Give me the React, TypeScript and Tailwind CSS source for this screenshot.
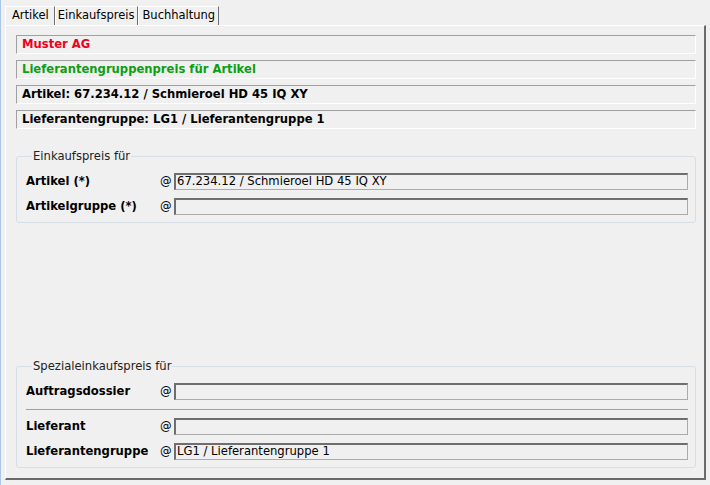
const font = { fontFamily: '"DejaVu Sans", Verdana, sans-serif' };

const HeaderBox = ({ text, color = "text-black" }: { text: string; color?: string }) => (
  <div className={`h-[19px] flex items-center pl-[5px] border-t border-l border-[#a0a0a0] border-b-white border-r-white border-b border-r text-[11.6px] font-bold ${color}`}>
    {text}
  </div>
);

const Field = ({ label, value = "" }: { label: string; value?: string }) => (
  <div className="flex items-center h-[17px]">
    <div className="w-[134px] text-[11.6px] font-bold text-black">{label}</div>
    <div className="w-[14px] text-[11.6px] text-black">@</div>
    <div className="flex-1 h-[17px] flex items-center pl-[1px] text-[11.6px] text-black border-t-2 border-l-2 border-[#6e6e6e] border-b border-r border-b-[#ababab] border-r-[#ababab] leading-none">
      {value}
    </div>
  </div>
);

const Group = ({ title, children }: { title: string; children: React.ReactNode }) => (
  <fieldset className="border border-[#d5dfe5] rounded-[3px] pl-[9px] pr-[7px] pt-[10px] pb-[7px]">
    <legend className="ml-[6px] px-[1px] text-[11.6px] leading-[13px] text-[#222]">{title}</legend>
    <div className="flex flex-col gap-[8px]">{children}</div>
  </fieldset>
);

export default function App() {
  return (
    <div style={font} className="w-[710px] h-[485px] bg-[#f0f0f0] border-l border-[#a9c6e4] overflow-hidden">
      <div className="flex pl-[4px] pt-[6px] h-[25px]">
        <div className="flex items-center pl-[6px] pr-[5px] h-[19px] border-t border-l border-white border-r border-r-[#6e6e6e] text-[11.5px] text-black">
          Artikel
        </div>
        <div className="flex items-center pl-[2px] pr-[3px] h-[19px] border-t border-l border-white border-r border-r-[#6e6e6e] text-[11.5px] text-black">
          Einkaufspreis
        </div>
        <div className="flex items-center pl-[3px] pr-[3px] h-[19px] border-t border-l border-white border-r border-r-[#6e6e6e] text-[11.5px] text-black">
          Buchhaltung
        </div>
      </div>
      <div className="ml-[4px] w-[701px] h-[455px] border-t border-l border-white border-r-2 border-b-2 border-r-[#6a6a6a] border-b-[#6a6a6a] pl-[10px] pr-[8px] pt-[9px]">
        <div className="flex flex-col gap-[6px]">
          <HeaderBox text="Muster AG" color="text-[#ee0022]" />
          <HeaderBox text="Lieferantengruppenpreis für Artikel" color="text-[#0d9e12]" />
          <HeaderBox text="Artikel: 67.234.12 / Schmieroel HD 45 IQ XY" />
          <HeaderBox text="Lieferantengruppe: LG1 / Lieferantengruppe 1" />
        </div>
        <div className="mt-[21px]">
          <Group title="Einkaufspreis für">
            <Field label="Artikel (*)" value="67.234.12 / Schmieroel HD 45 IQ XY" />
            <Field label="Artikelgruppe (*)" />
          </Group>
        </div>
        <div className="mt-[137px]">
          <Group title="Spezialeinkaufspreis für">
            <Field label="Auftragsdossier" />
            <div className="h-[1px] bg-[#a0a0a0] mt-[1px]" />
            <Field label="Lieferant" />
            <Field label="Lieferantengruppe" value="LG1 / Lieferantengruppe 1" />
          </Group>
        </div>
      </div>
    </div>
  );
}
